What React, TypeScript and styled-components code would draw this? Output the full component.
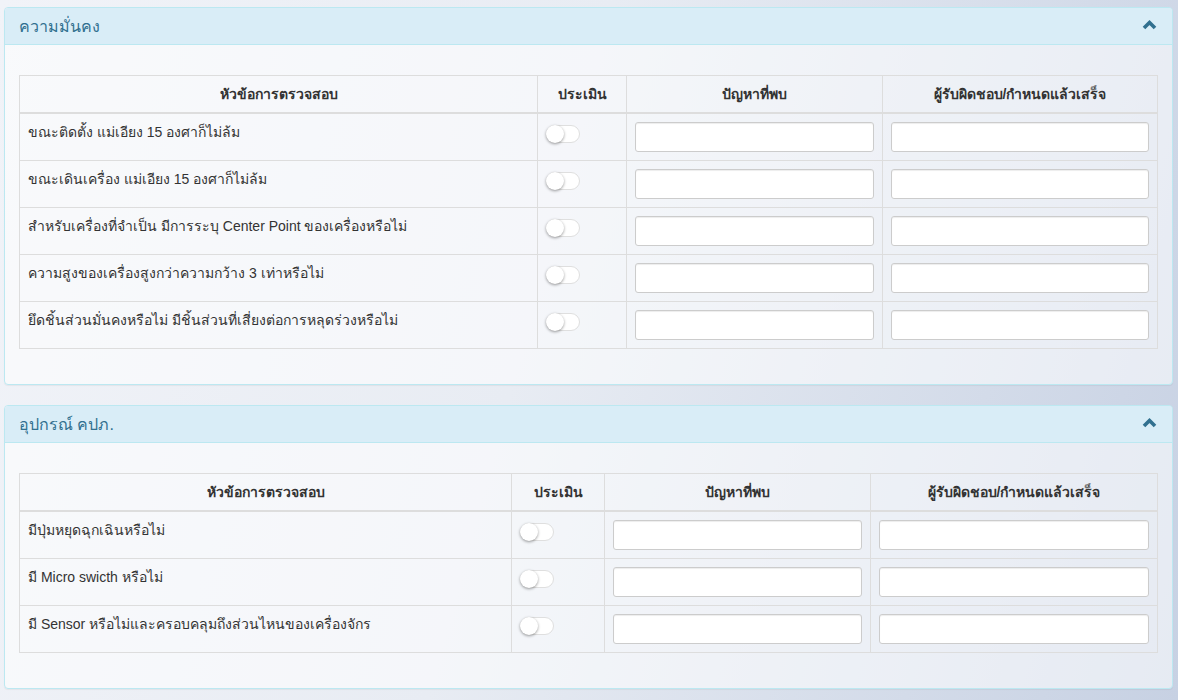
import React from 'react';
import styled, { createGlobalStyle } from 'styled-components';

const GlobalStyle = createGlobalStyle`
    html, body {
        margin: 0;
        padding: 0;
    }
    body {
        min-height: 700px;
        font-family: 'Liberation Sans', 'Noto Sans', Arial, sans-serif;
        font-size: 14px;
        color: #333;
        background: linear-gradient(105deg, #f1f3f8 0%, #e8ecf3 45%, #d3dbe9 80%, #c7d1e3 100%);
        background-attachment: fixed;
    }
`;

const St = {
    Page: styled.div`
        padding: 7px 5px 10px 4px;
        display: flex;
        flex-direction: column;
        gap: 20px;
    `,
    Panel: styled.section`
        border: 1px solid #bce8f1;
        border-radius: 4px;
        background: rgba(255, 255, 255, 0.55);
        box-shadow: 0 1px 1px rgba(0, 0, 0, 0.05);
        overflow: hidden;
    `,
    PanelHeading: styled.div`
        display: flex;
        align-items: center;
        justify-content: space-between;
        height: 37px;
        padding: 0 15px 0 14px;
        background: #d9edf7;
        border-bottom: 1px solid #bce8f1;
        color: #31708f;
        box-sizing: border-box;
    `,
    PanelTitle: styled.h3`
        margin: 0;
        font-size: 16px;
        font-weight: normal;
        color: #31708f;
    `,
    Toggle: styled.button`
        display: flex;
        align-items: center;
        border: 0;
        padding: 0;
        margin-top: -3px;
        background: none;
        cursor: pointer;
    `,
    PanelBody: styled.div`
        padding: 30px 15px 35px 14px;
    `,
    Table: styled.table`
        width: 100%;
        border-collapse: collapse;
        table-layout: fixed;
        border: 1px solid #ddd;
    `,
    Th: styled.th`
        border: 1px solid #ddd;
        border-bottom: 2px solid #ddd;
        padding: 8px;
        height: 20px;
        font-weight: bold;
        text-align: center;
        line-height: 20px;
        color: #333;
    `,
    Td: styled.td`
        border: 1px solid #ddd;
        padding: 8px;
        vertical-align: top;
        line-height: 20px;
        color: #333;
    `,
    TextInput: styled.input`
        display: block;
        width: 100%;
        height: 30px;
        box-sizing: border-box;
        padding: 5px 10px;
        font-size: 12px;
        border: 1px solid #ccc;
        border-radius: 3px;
        background: #fff;
        box-shadow: inset 0 1px 1px rgba(0, 0, 0, 0.075);
    `,
    Switch: styled.span`
        position: relative;
        display: block;
        width: 34px;
        height: 18px;
        margin: 3px 0 0 0;
        border: 1px solid #dfdfdf;
        border-radius: 10px;
        background: #fff;
        box-sizing: border-box;
    `,
    Knob: styled.span`
        position: absolute;
        left: -1px;
        top: -1px;
        width: 18px;
        height: 18px;
        border-radius: 50%;
        background: #fff;
        box-shadow: 0 1px 3px rgba(0, 0, 0, 0.4);
    `,
};

const ChevronUp = () => (
    <svg width="15" height="11" viewBox="0 0 15 11">
        <polyline points="2,9 7.5,3.5 13,9" fill="none" stroke="#31708f" strokeWidth="3.6" strokeLinecap="butt" />
    </svg>
);

const Section = ({ title, items, widths }: { title: string; items: string[]; widths: number[] }) => (
    <St.Panel>
        <St.PanelHeading>
            <St.PanelTitle>{title}</St.PanelTitle>
            <St.Toggle aria-label="collapse">
                <ChevronUp />
            </St.Toggle>
        </St.PanelHeading>
        <St.PanelBody>
            <St.Table>
                <colgroup>
                    {widths.map((w, i) => (
                        <col key={i} style={{ width: w }} />
                    ))}
                </colgroup>
                <thead>
                    <tr>
                        <St.Th>หัวข้อการตรวจสอบ</St.Th>
                        <St.Th>ประเมิน</St.Th>
                        <St.Th>ปัญหาที่พบ</St.Th>
                        <St.Th>ผู้รับผิดชอบ/กำหนดแล้วเสร็จ</St.Th>
                    </tr>
                </thead>
                <tbody>
                    {items.map((item) => (
                        <tr key={item}>
                            <St.Td>{item}</St.Td>
                            <St.Td>
                                <St.Switch>
                                    <St.Knob />
                                </St.Switch>
                            </St.Td>
                            <St.Td>
                                <St.TextInput type="text" />
                            </St.Td>
                            <St.Td>
                                <St.TextInput type="text" />
                            </St.Td>
                        </tr>
                    ))}
                </tbody>
            </St.Table>
        </St.PanelBody>
    </St.Panel>
);

export default function App() {
    return (
        <>
            <GlobalStyle />
            <St.Page>
                <Section
                    title="ความมั่นคง"
                    widths={[518, 89, 256, 275]}
                    items={[
                        'ขณะติดตั้ง แม่เอียง 15 องศาก็ไม่ล้ม',
                        'ขณะเดินเครื่อง แม่เอียง 15 องศาก็ไม่ล้ม',
                        'สำหรับเครื่องที่จำเป็น มีการระบุ Center Point ของเครื่องหรือไม่',
                        'ความสูงของเครื่องสูงกว่าความกว้าง 3 เท่าหรือไม่',
                        'ยึดชิ้นส่วนมั่นคงหรือไม่ มีชิ้นส่วนที่เสี่ยงต่อการหลุดร่วงหรือไม่',
                    ]}
                />
                <Section
                    title="อุปกรณ์ คปภ."
                    widths={[492, 93, 266, 287]}
                    items={[
                        'มีปุ่มหยุดฉุกเฉินหรือไม่',
                        'มี Micro swicth หรือไม่',
                        'มี Sensor หรือไม่และครอบคลุมถึงส่วนไหนของเครื่องจักร',
                    ]}
                />
            </St.Page>
        </>
    );
}
